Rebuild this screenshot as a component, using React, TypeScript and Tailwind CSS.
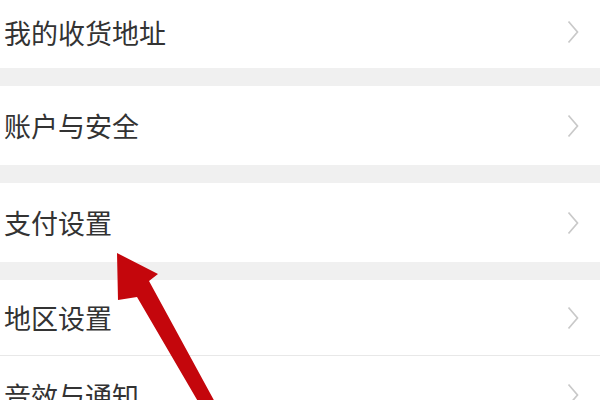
import React from "react";

const Chevron = () => (
  <svg width="12" height="24" viewBox="0 0 12 24" className="shrink-0">
    <polyline points="1.5,1.5 10.5,12 1.5,22.5" fill="none" stroke="#c9c9c9" strokeWidth="1.7" strokeLinejoin="miter" />
  </svg>
);

const Row = ({ label, h, extra = "" }: { label: string; h: string; extra?: string }) => (
  <div className={`flex items-center justify-between bg-white pl-[4px] pr-[21px] ${h} ${extra}`}>
    <span className="text-[27px] leading-none text-[#333333]" style={{ fontFamily: '"Noto Sans CJK SC", "Noto Sans", sans-serif' }}>
      {label}
    </span>
    <Chevron />
  </div>
);

const Sep = () => <div className="h-[18px] bg-[#f0f0f0]" />;

export default function App() {
  return (
    <div className="relative w-[600px] h-[400px] overflow-hidden bg-white">
      <div className="flex flex-col">
        <Row label="我的收货地址" h="h-[68px]" extra="pb-[4px]" />
        <Sep />
        <Row label="账户与安全" h="h-[79px]" />
        <Sep />
        <Row label="支付设置" h="h-[79px]" />
        <Sep />
        <Row label="地区设置" h="h-[75px]" />
        <div className="h-px bg-[#e8e8e8]" />
        <Row label="音效与通知" h="h-[78px]" />
      </div>
      <svg className="absolute left-0 top-0" width="600" height="400" viewBox="0 0 600 400">
        <polygon
          points="117,253 158,274 149,281 216,404 203,410 137,297 118,300"
          fill="#c4060c"
        />
      </svg>
    </div>
  );
}
